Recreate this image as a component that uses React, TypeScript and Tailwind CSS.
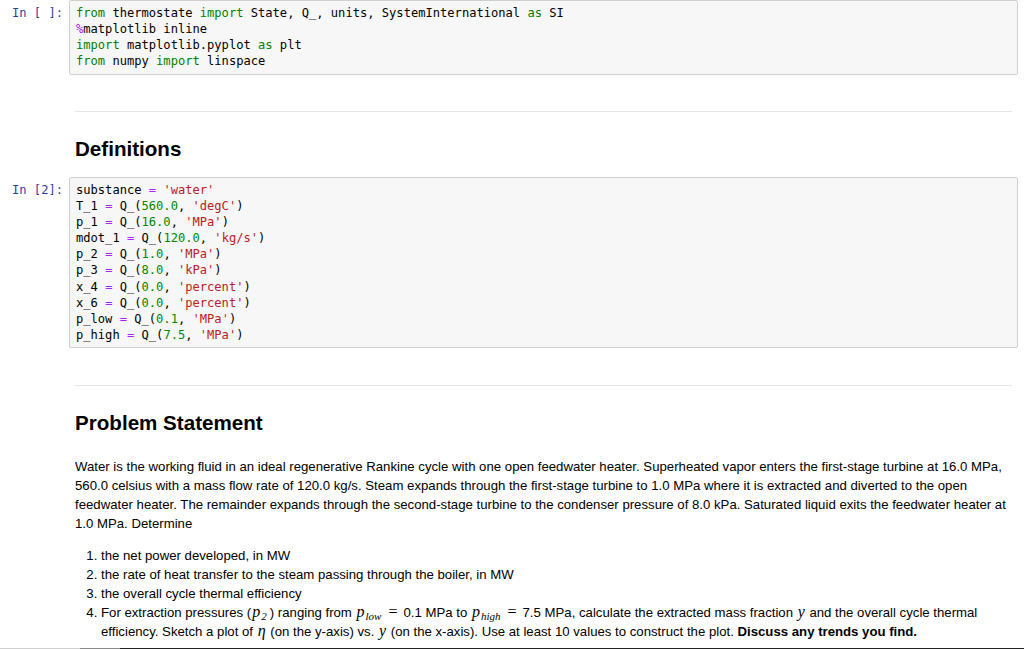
import type { ReactNode } from "react"

const mono = "font-['DejaVu_Sans_Mono','Liberation_Mono',monospace] text-[12.1px] leading-[16.15px]"

function K({ children }: { children: ReactNode }) {
	return <span className="text-[#008000]">{children}</span>
}

function S({ children }: { children: ReactNode }) {
	return <span className="text-[#ba2121]">{children}</span>
}

function N({ children }: { children: ReactNode }) {
	return <span className="text-[#008800]">{children}</span>
}

function O({ children }: { children: ReactNode }) {
	return <span className="text-[#aa22ff]">{children}</span>
}

function M({ children }: { children: ReactNode }) {
	return <span className="mx-[1px] font-['Liberation_Serif',serif] text-[16px] leading-none italic">{children}</span>
}

function Sub({ children }: { children: ReactNode }) {
	return <span className="relative top-[3px] ml-[1px] text-[11px] leading-none">{children}</span>
}

function Eq() {
	return <span className="mx-[6px] font-['Liberation_Serif',serif] text-[16px] leading-none">=</span>
}

type CodeCellProps = {
	prompt: string
	lines: ReactNode[]
}

function CodeCell({ prompt, lines }: CodeCellProps) {
	return (
		<div className="flex">
			<div className={`w-[69px] shrink-0 whitespace-pre pt-[5px] pr-[6px] text-right text-[#303f9f] ${mono}`}>{prompt}</div>
			<div className={`w-[949px] rounded-[2px] border border-[#cfcfcf] bg-[#f7f7f7] px-[6px] py-[4px] text-black ${mono}`}>
				{lines.map((line, i) => (
					<div key={i} className="whitespace-pre">
						{line}
					</div>
				))}
			</div>
		</div>
	)
}

function Q(num: string, unit: string) {
	return (
		<>
			Q_(<N>{num}</N>, <S>'{unit}'</S>)
		</>
	)
}

export default function App() {
	const importLines = [
		<>
			<K>from</K> thermostate <K>import</K> State, Q_, units, SystemInternational <K>as</K> SI
		</>,
		<>
			<O>%</O>matplotlib inline
		</>,
		<>
			<K>import</K> matplotlib.pyplot <K>as</K> plt
		</>,
		<>
			<K>from</K> numpy <K>import</K> linspace
		</>,
	]

	const defs: [string, string, string][] = [
		["T_1", "560.0", "degC"],
		["p_1", "16.0", "MPa"],
		["mdot_1", "120.0", "kg/s"],
		["p_2", "1.0", "MPa"],
		["p_3", "8.0", "kPa"],
		["x_4", "0.0", "percent"],
		["x_6", "0.0", "percent"],
		["p_low", "0.1", "MPa"],
		["p_high", "7.5", "MPa"],
	]

	const defLines = [
		<>
			substance <O>=</O> <S>'water'</S>
		</>,
		...defs.map(([name, num, unit]) => (
			<>
				{name} <O>=</O> {Q(num, unit)}
			</>
		)),
	]

	return (
		<div className="flex h-[649px] flex-col overflow-hidden bg-white font-['Liberation_Sans',Arial,sans-serif] text-black">
			<div className="min-h-0 flex-1 overflow-hidden">
				<CodeCell prompt="In [ ]:" lines={importLines} />

				<div className="ml-[75px] w-[937px]">
					<div className="mt-[36px] h-px bg-[#e6e6e6]" />
					<h2 className="mt-[25px] text-[20.6px] font-bold leading-[24px]">Definitions</h2>
				</div>

				<div className="mt-[16px]">
					<CodeCell prompt="In [2]:" lines={defLines} />
				</div>

				<div className="ml-[75px] w-[937px]">
					<div className="mt-[37px] h-px bg-[#e6e6e6]" />
					<h2 className="mt-[25px] text-[20.6px] font-bold leading-[24px]">Problem Statement</h2>

					<p className="mt-[22px] whitespace-nowrap text-[13.2px] leading-[19px]">
						Water is the working fluid in an ideal regenerative Rankine cycle with one open feedwater heater. Superheated vapor enters the first-stage turbine at 16.0 MPa,
						<br />
						560.0 celsius with a mass flow rate of 120.0 kg/s. Steam expands through the first-stage turbine to 1.0 MPa where it is extracted and diverted to the open
						<br />
						feedwater heater. The remainder expands through the second-stage turbine to the condenser pressure of 8.0 kPa. Saturated liquid exits the feedwater heater at
						<br />
						1.0 MPa. Determine
					</p>

					<ol className="mt-[13px] list-outside list-decimal whitespace-nowrap pl-[26px] text-[13.2px] leading-[19px]">
						<li>the net power developed, in MW</li>
						<li>the rate of heat transfer to the steam passing through the boiler, in MW</li>
						<li>the overall cycle thermal efficiency</li>
						<li>
							For extraction pressures (
							<M>
								p<Sub>2</Sub>
							</M>
							<span className="ml-[2px]">)</span> ranging from{" "}
							<M>
								p<Sub>low</Sub>
							</M>
							<Eq />0.1 MPa to{" "}
							<M>
								p<Sub>high</Sub>
							</M>
							<Eq />7.5 MPa, calculate the extracted mass fraction <M>y</M> and the overall cycle thermal
							<br />
							efficiency. Sketch a plot of <M>η</M> (on the y-axis) vs. <M>y</M> (on the x-axis). Use at least 10 values to construct the plot.{" "}
							<b>Discuss any trends you find.</b>
						</li>
					</ol>
				</div>
			</div>
			<div className="flex h-px shrink-0">
				<div className="w-[80px] bg-[#cfcfcf]" />
				<div className="w-[40px] bg-[#8a8a8a]" />
				<div className="flex-1 bg-[#222]" />
			</div>
		</div>
	)
}
